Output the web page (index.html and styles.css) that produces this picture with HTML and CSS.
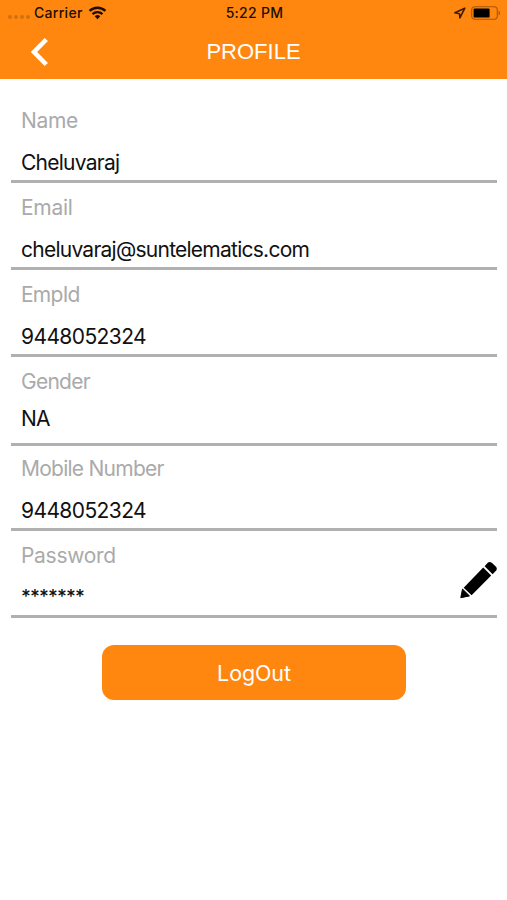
FILE: index.html
```html
<!DOCTYPE html>
<html lang="en">
<head>
    <meta charset="UTF-8">
    <title>Profile</title>
    <link rel="stylesheet" href="styles.css">
</head>
<body>
    <div class="header">
        <div class="status-bar">
            <div class="status-left">
                <div class="signal"><span></span><span></span><span></span><span></span></div>
                <span class="carrier">Carrier</span>
                <svg class="wifi" width="19" height="14" viewBox="0 0 20 15">
                    <path d="M1.5 5.3a12.2 12.2 0 0 1 17 0" fill="none" stroke="#1c0f00" stroke-width="2.7"/>
                    <path d="M4.7 8.7a7.6 7.6 0 0 1 10.6 0" fill="none" stroke="#1c0f00" stroke-width="2.5"/>
                    <path d="M10 14.2l-3-3.1a4.3 4.3 0 0 1 6 0z" fill="#1c0f00"/>
                </svg>
            </div>
            <span class="time">5:22 PM</span>
            <div class="status-right">
                <svg width="12" height="12" viewBox="0 0 12 12">
                    <path d="M10.8 1.2L.9 5.8l4.6 1 .4 4.1z" fill="none" stroke="#3a1d00" stroke-width="1.6" stroke-linejoin="round"/>
                </svg>
                <svg width="30" height="14" viewBox="0 0 30 14">
                    <rect x=".7" y=".7" width="25.6" height="12.6" rx="3.2" fill="none" stroke="#a65507" stroke-width="1.1"/>
                    <rect x="2.6" y="2.4" width="16" height="9.2" rx="1.2" fill="#000"/>
                    <path d="M27.6 4.7c1.9.7 1.9 3.9 0 4.6z" fill="#a65507"/>
                </svg>
            </div>
        </div>
        <div class="nav-bar">
            <svg class="back" width="20" height="30" viewBox="0 0 20 30">
                <path d="M16.3 2.5L4 15l12.3 12.5" fill="none" stroke="#fff" stroke-width="4.6"/>
            </svg>
            <h1>PROFILE</h1>
        </div>
    </div>

    <div class="container">
        <div class="field">
            <div class="label">Name</div>
            <div class="value">Cheluvaraj</div>
        </div>
        <div class="field">
            <div class="label">Email</div>
            <div class="value">cheluvaraj@suntelematics.com</div>
        </div>
        <div class="field">
            <div class="label tight">EmpId</div>
            <div class="value number">9448052324</div>
        </div>
        <div class="field gender">
            <div class="label tight">Gender</div>
            <div class="value">NA</div>
        </div>
        <div class="field mobile">
            <div class="label tight">Mobile Number</div>
            <div class="value number">9448052324</div>
        </div>
        <div class="field password">
            <div>
                <div class="label">Password</div>
                <div class="value">*******</div>
            </div>
            <svg class="edit" width="38" height="38" viewBox="0 0 38 38">
                <path d="M1.8 36.7l1.7-8.6 7 6.8z" stroke="#000" stroke-width="1" stroke-linejoin="round"/>
                <path d="M4.7 26.7L24.2 6.6l8 8-19.6 19.6z"/>
                <path d="M25.6 5.2l3.4-3.6q1.8-1.5 3.8.2l4.2 3.9q1.5 1.7.2 3.8l-3.6 3.7z"/>
            </svg>
        </div>

        <button class="logout">LogOut</button>
    </div>
</body>
</html>
```

FILE: styles.css
```css
body {
    font-family: Inter, "Liberation Sans", sans-serif;
    padding: 0;
    margin: 0;
    background-color: #fff;
}

.header {
    height: 79px;
    background-color: #ff870f;
    color: white;
}

.status-bar {
    display: grid;
    grid-template-columns: 1fr auto 1fr;
    align-items: center;
    height: 26px;
    padding: 0 6px 0 8px;
    font-size: 14px;
    line-height: 16px;
    font-weight: 500;
    letter-spacing: 0.3px;
    color: #1c0f00;
}

.status-left, .status-right {
    display: flex;
    align-items: center;
}

.status-right {
    justify-content: flex-end;
    gap: 5px;
}

.signal {
    display: flex;
    gap: 2px;
    width: 26px;
    padding-top: 8px;
}

.signal span {
    width: 4px;
    height: 4px;
    border-radius: 50%;
    background-color: #d2700f;
}

.wifi {
    margin-left: 5px;
}

.nav-bar {
    display: grid;
    grid-template-columns: 60px 1fr 60px;
    align-items: center;
    height: 52px;
}

.back {
    margin-left: 30px;
}

h1 {
    margin: 0;
    font-family: "Liberation Sans", sans-serif;
    font-size: 22px;
    font-weight: 400;
    text-align: center;
}

.container {
    padding: 17px 10px 0 11px;
}

.field {
    box-sizing: border-box;
    height: 87px;
    padding: 10px 0 0 10px;
    border-bottom: 3px solid #b0b0b0;
    font-size: 21px;
    line-height: 30px;
    letter-spacing: -0.3px;
}

.label {
    margin-bottom: 12px;
    color: #aaa;
}

.tight {
    letter-spacing: -0.75px;
}

.value {
    color: #111;
    letter-spacing: -0.75px;
}

.number {
    letter-spacing: -0.6px;
}

.gender {
    height: 89px;
}

.gender .label {
    margin-bottom: 7px;
}

.mobile {
    height: 85px;
    padding-top: 8px;
}

.password {
    display: flex;
    justify-content: space-between;
}

.password .label {
    margin-bottom: 11px;
}

.password .value {
    font-size: 19px;
    font-weight: 500;
    letter-spacing: -0.9px;
}

.edit {
    margin-top: 20px;
}

.logout {
    display: block;
    width: 304px;
    height: 55px;
    margin: 27px auto 0;
    border: none;
    border-radius: 12px;
    background-color: #ff870f;
    color: white;
    font-family: inherit;
    font-size: 21.5px;
    letter-spacing: -0.1px;
}
```
